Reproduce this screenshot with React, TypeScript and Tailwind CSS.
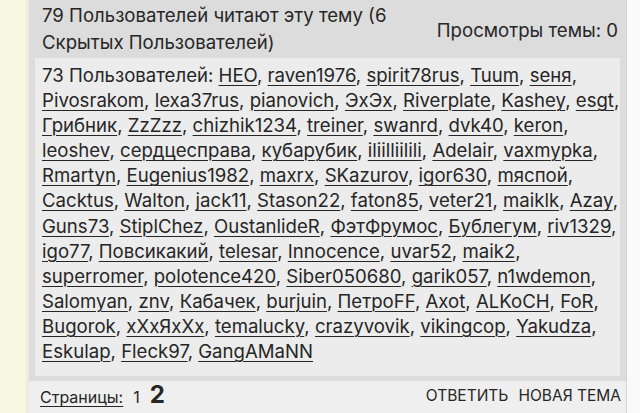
import React from 'react';

const ROWS: string[][] = [
  ['НЕО', 'raven1976', 'spirit78rus', 'Tuum', 'seня'],
  ['Pivosrakom', 'lexa37rus', 'pianovich', 'ЭхЭх', 'Riverplate', 'Kashey', 'esgt'],
  ['Грибник', 'ZzZzz', 'chizhik1234', 'treiner', 'swanrd', 'dvk40', 'keron'],
  ['leoshev', 'сердцесправа', 'кубарубик', 'iliilliilili', 'Adelair', 'vaxmypka'],
  ['Rmartyn', 'Eugenius1982', 'maxrx', 'SKazurov', 'igor630', 'mяcпой'],
  ['Cacktus', 'Walton', 'jack11', 'Stason22', 'faton85', 'veter21', 'maiklk', 'Azay'],
  ['Guns73', 'StiplChez', 'OustanlideR', 'ФэтФрумос', 'Бублегум', 'riv1329'],
  ['igo77', 'Повсикакий', 'telesar', 'Innocence', 'uvar52', 'maik2'],
  ['superromer', 'polotence420', 'Siber050680', 'garik057', 'n1wdemon'],
  ['Salomyan', 'znv', 'Кабачек', 'burjuin', 'ПетроFF', 'Axot', 'ALKoCH', 'FoR'],
  ['Bugorok', 'xXxЯxXx', 'temalucky', 'crazyvovik', 'vikingcop', 'Yakudza'],
  ['Eskulap', 'Fleck97', 'GangAMaNN'],
];

const FONT = "font-['Inter','Liberation_Sans',sans-serif]";

export default function App() {
  const last = ROWS.length - 1;
  return (
    <div className={`flex h-[413px] w-[640px] overflow-hidden bg-white text-[#262626] ${FONT}`}>
      <div className="w-[29px] shrink-0 border-r-[3px] border-[#ecece0] bg-[#f7f7e4]" />

      <div className="flex w-[598px] shrink-0 flex-col border-r border-[#d4d4d4] bg-[#dcdcdc]">
        {/* who's reading header */}
        <div className="flex items-center justify-between pl-[13px] pr-[8px] pt-[2px] text-[18.6px] leading-[27px]">
          <p className="w-[380px]">79 Пользователей читают эту тему (6 Скрытых Пользователей)</p>
          <p className="pt-[3px]">Просмотры темы: 0</p>
        </div>

        {/* user list */}
        <div className="mx-[6px] mt-[2px] overflow-hidden bg-[#ececec] pb-[12px] pl-[7px] pt-[5px] text-[18.6px] leading-[25.1px]">
          {ROWS.map((row, i) => (
            <div key={i} className="whitespace-nowrap">
              {i === 0 && '73 Пользователей: '}
              {row.map((name, j) => (
                <React.Fragment key={name}>
                  <a href="#" className="underline decoration-1 underline-offset-[3px]">{name}</a>
                  {(j < row.length - 1 || i < last) && ', '}
                </React.Fragment>
              ))}
            </div>
          ))}
        </div>

        {/* footer */}
        <div className="mt-[5px] flex flex-1 items-center justify-between bg-[#efefef] pl-[11px] pr-[5px] pb-[2px]">
          <div className="flex items-baseline gap-[10px]">
            <a href="#" className="text-[16px] underline underline-offset-[3px]">Страницы:</a>
            <span className="text-[16px]">1</span>
            <span className="text-[24px] font-bold leading-none">2</span>
          </div>
          <div className="flex gap-[10px] text-[15.5px] uppercase">
            <span>Ответить</span>
            <span>Новая тема</span>
          </div>
        </div>
      </div>

      <div className="flex-1 bg-[#fafafa]" />
    </div>
  );
}
